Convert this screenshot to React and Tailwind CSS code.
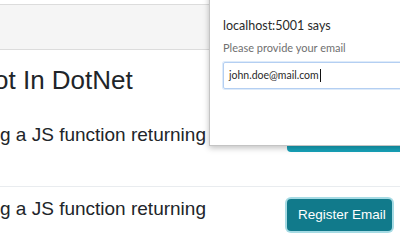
import React from "react";

const Row = ({ className, btnClass, btnTop, textTop }) => (
  <div className={`flex items-start justify-between ${className}`}>
    <p className={`text-[19px] leading-[24px] text-[#212529] whitespace-nowrap ${textTop}`}>
      g a JS function returning
    </p>
    <button className={`h-[32px] px-[11px] rounded-[4px] text-white text-[13.5px] whitespace-nowrap ${btnClass} ${btnTop}`}>
      Register Email
    </button>
  </div>
);

const PromptDialog = () => (
  <div className="absolute left-[209px] top-[-10px] w-[200px] h-[156px] bg-white border border-[#c4c4c4] shadow-[0_2px_6px_rgba(0,0,0,0.25)] font-['Lato',sans-serif]">
    <div className="pt-[27px] pl-[13px]">
      <div className="text-[12.5px] leading-[16px] text-[#2a2a2a]">localhost:5001 says</div>
      <div className="mt-[7px] text-[11px] leading-[14px] text-[#707070]">Please provide your email</div>
      <div className="mt-[7px] h-[27px] border border-[#b4cff2] rounded-[2px] shadow-[0_0_0_1px_rgba(190,215,245,0.5)] flex items-center pl-[5px]">
        <span className="text-[10.5px] text-[#2a2a2a]">john.doe@mail.com</span>
        <span className="ml-px w-px h-[13px] bg-[#111]" />
      </div>
    </div>
  </div>
);

export default function App() {
  return (
    <div className="relative w-[400px] h-[250px] overflow-hidden bg-white font-['Liberation_Sans',Arial,sans-serif]">
      <div className="h-[4px]" />
      <div className="h-[46px] border-y border-[#dcdcdc] bg-[#f5f5f5]" />
      <h1 className="mt-[17px] -ml-[6px] text-[26px] leading-none text-[#212529] whitespace-nowrap">
        ot In DotNet
      </h1>
      <Row
        className="mt-[27px] h-[66px] pr-0"
        btnClass="bg-[#17a2b8] w-[125px] -mr-[12px]"
        btnTop="mt-0"
        textTop="mt-[3px]"
      />
      <Row
        className="h-[64px] border-t border-[#e9ecef] pr-[8px]"
        btnClass="bg-[#117a8b] w-[105px] shadow-[0_0_0_2px_rgba(58,176,195,0.45)]"
        btnTop="mt-[12px]"
        textTop="mt-[10px]"
      />
      <PromptDialog />
    </div>
  );
}
